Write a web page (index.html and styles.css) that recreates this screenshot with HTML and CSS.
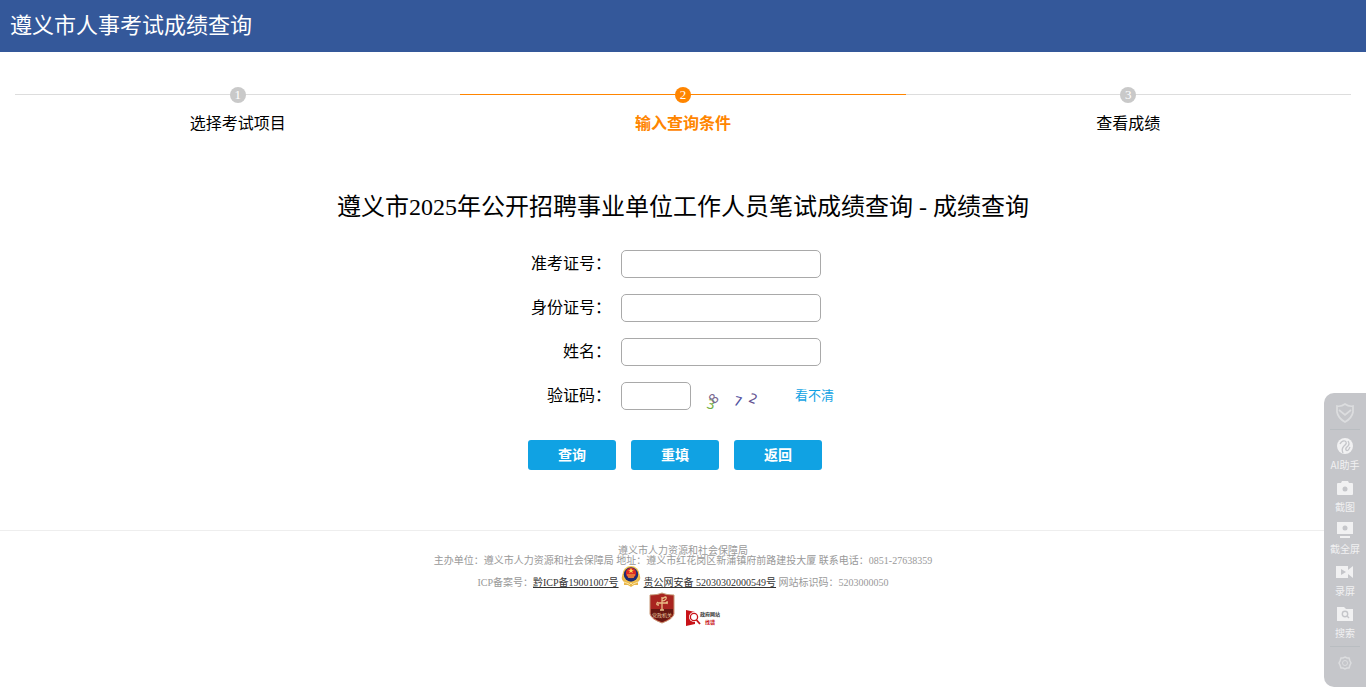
FILE: index.html
```
<!DOCTYPE html>
<html lang="zh-CN">
<head>
    <meta charset="UTF-8">
    <meta name="viewport" content="width=device-width, initial-scale=1.0">
    <title>遵义市人事考试成绩查询</title>
    <link rel="stylesheet" href="styles.css">
</head>
<body>
    <header class="header">遵义市人事考试成绩查询</header>

    <ol class="steps">
        <li class="step"><span class="step-num">1</span><span class="step-name">选择考试项目</span></li>
        <li class="step active"><span class="step-num">2</span><span class="step-name">输入查询条件</span></li>
        <li class="step"><span class="step-num">3</span><span class="step-name">查看成绩</span></li>
    </ol>

    <main>
        <h1 class="title">遵义市2025年公开招聘事业单位工作人员笔试成绩查询 - 成绩查询</h1>
        <form class="form">
            <div class="row">
                <label for="zkzh">准考证号：</label>
                <input type="text" id="zkzh">
            </div>
            <div class="row">
                <label for="sfzh">身份证号：</label>
                <input type="text" id="sfzh">
            </div>
            <div class="row">
                <label for="xm">姓名：</label>
                <input type="text" id="xm">
            </div>
            <div class="row">
                <label for="yzm">验证码：</label>
                <input type="text" id="yzm" class="short">
                <svg class="captcha" viewBox="0 0 84 28">
                    <text x="6" y="27" fill="#6fae3c" transform="rotate(15 10 22)">3</text>
                    <text x="9" y="21" fill="#7b6890" transform="rotate(-45 13 17)">8</text>
                    <text x="33" y="24" fill="#5050a0" transform="rotate(15 37 19)">7</text>
                    <text x="48" y="21" fill="#62508f" transform="rotate(20 52 17)">2</text>
                </svg>
                <a href="#" class="refresh">看不清</a>
            </div>
            <div class="buttons">
                <button type="submit">查询</button>
                <button type="reset">重填</button>
                <button type="button">返回</button>
            </div>
        </form>
    </main>

    <footer class="footer">
        <p>遵义市人力资源和社会保障局</p>
        <p>主办单位：遵义市人力资源和社会保障局 地址：遵义市红花岗区新蒲镇府前路建投大厦 联系电话：0851-27638359</p>
        <p class="record">ICP备案号：<a href="#">黔ICP备19001007号</a>
            <svg class="police" viewBox="0 0 20 22">
                <path d="M2 8 Q-1 13 3 16 L3 19 L7 19 L10 21 L13 19 L17 19 L17 16 Q21 13 18 8Z" fill="#e9b64c"/>
                <path d="M3 16 L8 18 M17 16 L12 18 M7 20 L10 17 L13 20" stroke="#fbe5a1" fill="none"/>
                <circle cx="10" cy="8.5" r="8.5" fill="#f2c24d"/>
                <circle cx="10" cy="8.5" r="7.2" fill="#1c2c73"/>
                <circle cx="10" cy="7" r="5.2" fill="#d92824"/>
                <path d="M10 2 L11 4 L13 4 L11 5 L12 7 L10 6 L8 7 L9 5 L7 4 L9 4Z" fill="#ffdc55"/>
                <path d="M6 9 H14 M7 11 H13" stroke="#f4c34d"/>
            </svg>
            <a href="#">贵公网安备 52030302000549号</a> 网站标识码：5203000050</p>
        <div class="badges">
            <svg class="shield" viewBox="0 0 26 32">
                <path d="M13 1 Q17 3 25 3 V22 Q24 27 13 31 Q2 27 1 22 V3 Q9 3 13 1Z" fill="#a92520" stroke="#c69876"/>
                <path d="M2 17 H24 V22 Q23 26 13 30 Q3 26 2 22Z" fill="#671812"/>
                <path d="M13 5 V18 M13 7 Q18 3 17 7 Q16 9 13 9 M9 11 H17 Q19 8 18 12 M9 10 Q6 13 10 13 M11 18 H15" fill="none" stroke="#e9bd86" stroke-width="1.3"/>
                <text x="13" y="25" text-anchor="middle">党政机关</text>
            </svg>
            <svg class="finder" viewBox="0 0 38 18">
                <path d="M1 1 L10 3 V15 L1 17Z" fill="#c81218"/>
                <circle cx="9" cy="8" r="5" fill="#fff"/>
                <circle cx="9" cy="8" r="3.6" fill="#fff" stroke="#c81218" stroke-width="1.3"/>
                <path d="M11.5 11 L15 15" stroke="#c81218" stroke-width="1.8"/>
                <text x="15" y="7" fill="#333">政府网站</text>
                <text x="20" y="15" fill="#c81218">找错</text>
            </svg>
        </div>
    </footer>

    <aside class="toolbar">
        <button type="button" class="tool faint" aria-label="盾牌">
            <svg viewBox="0 0 20 20"><path d="M10 1 Q14 4 18 3 V9 Q17 15 10 19 Q3 15 2 9 V3 Q6 4 10 1Z M4 7 L10 12 L16 7" fill="none" stroke="currentColor" stroke-width="1.7"/></svg>
        </button>
        <hr>
        <button type="button" class="tool">
            <svg viewBox="0 0 20 20"><circle cx="10" cy="10" r="8" fill="currentColor"/><path d="M5 8 Q7 4 10 5 Q13 7 9 10 Q6 13 8 17 M15 11 Q13 16 11 14 Q10 12 13 10 Q15 8 13 5" fill="none" stroke="#c5c6ca" stroke-width="1.3"/></svg>
            <span>AI助手</span>
        </button>
        <button type="button" class="tool">
            <svg viewBox="0 0 20 20"><path d="M3 5 H6 L7 3 H13 L14 5 H17 Q18 5 18 6 V16 Q18 17 17 17 H3 Q2 17 2 16 V6 Q2 5 3 5Z" fill="currentColor"/><circle cx="10" cy="11" r="2.5" fill="#c5c6ca"/></svg>
            <span>截图</span>
        </button>
        <button type="button" class="tool">
            <svg viewBox="0 0 20 20"><path d="M2 2 H18 V14 H2Z M5 16 H15 V18 H5Z" fill="currentColor"/><circle cx="10" cy="8" r="2.5" fill="#c5c6ca"/></svg>
            <span>截全屏</span>
        </button>
        <button type="button" class="tool">
            <svg viewBox="0 0 20 20"><path d="M1 4 H13 V8 L18 4 V16 L13 12 V16 H1Z" fill="currentColor"/><path d="M6 7 L11 10 L6 13Z" fill="#c5c6ca"/></svg>
            <span>录屏</span>
        </button>
        <button type="button" class="tool">
            <svg viewBox="0 0 20 20"><path d="M2 3 H9 L11 5 H18 V17 H2Z" fill="currentColor"/><circle cx="10" cy="10" r="2.7" fill="none" stroke="#c5c6ca" stroke-width="1.4"/><path d="M12 12 L14 14" stroke="#c5c6ca" stroke-width="1.5"/></svg>
            <span>搜索</span>
        </button>
        <hr class="last">
        <button type="button" class="tool faint" aria-label="设置">
            <svg viewBox="0 0 20 20"><path d="M10 4 L12 5 L14 5 L15 8 L16 10 L15 12 L14 15 L12 15 L10 16 L8 15 L6 15 L5 12 L4 10 L5 8 L6 5 L8 5Z" fill="none" stroke="currentColor" stroke-width="1.5"/><circle cx="10" cy="10" r="2.5" fill="none" stroke="currentColor"/></svg>
        </button>
    </aside>
</body>
</html>
```
FILE: styles.css
```
* {
    box-sizing: border-box;
}
body {
    margin: 0;
    background: #fff;
    color: #000;
    font-family: "Liberation Serif", "Noto Sans CJK SC", serif;
    font-size: 16px;
    line-height: 24px;
}
.header {
    height: 52px;
    padding: 0 10px;
    background: #34589a;
    color: #fff;
    font-size: 22px;
    line-height: 52px;
}
.steps {
    display: flex;
    margin: 35px 0 0;
    padding: 0 15px;
    list-style: none;
}
.step {
    flex: 1;
    display: flex;
    flex-direction: column;
    align-items: center;
    gap: 9px;
    background: linear-gradient(#ddd, #ddd) 0 7px / 100% 1px no-repeat;
}
.step-num {
    width: 16px;
    height: 16px;
    border-radius: 50%;
    background: #c9c9c9;
    color: #fff;
    font-size: 13px;
    line-height: 16px;
    text-align: center;
}
.step.active {
    background-image: linear-gradient(#ff8500, #ff8500);
    color: #ff8500;
    font-weight: bold;
}
.step.active .step-num {
    background: #ff8500;
    font-weight: normal;
}
.title {
    margin: 54px 0 25px;
    font-size: 24px;
    font-weight: normal;
    line-height: 35px;
    text-align: center;
}
.form {
    width: 310px;
    margin: 0 auto;
}
.row {
    display: flex;
    align-items: center;
    gap: 10px;
    height: 28px;
    margin-bottom: 16px;
}
.row label {
    width: 83px;
    text-align: right;
    white-space: nowrap;
}
.row input {
    width: 200px;
    height: 28px;
    padding: 0 5px;
    border: 1px solid #a9a9a9;
    border-radius: 5px;
}
.row .short {
    width: 70px;
}
.captcha {
    width: 84px;
    height: 28px;
    overflow: visible;
    font-family: "DejaVu Sans", sans-serif;
    font-size: 13px;
}
.refresh {
    color: #10a2e3;
    font-size: 13px;
    text-decoration: none;
    white-space: nowrap;
}
.buttons {
    display: flex;
    gap: 15px;
    padding-top: 14px;
}
.buttons button {
    width: 88px;
    height: 30px;
    padding: 0 0 2px;
    border: none;
    border-radius: 3px;
    background: #10a2e3;
    color: #fff;
    font-family: inherit;
    font-size: 14px;
    font-weight: bold;
    cursor: pointer;
}
.footer {
    margin-top: 60px;
    padding-top: 15px;
    border-top: 1px solid #eee;
    color: #999;
    font-size: 10px;
    line-height: 10px;
    text-align: center;
}
.footer p {
    margin: 0;
}
.footer a {
    color: #333;
}
.footer .record {
    height: 26px;
    line-height: 22px;
}
.police {
    width: 20px;
    height: 22px;
    vertical-align: -2px;
}
.badges {
    display: flex;
    justify-content: center;
    align-items: flex-start;
    gap: 10px;
    padding-left: 6px;
}
.shield {
    width: 26px;
    height: 32px;
    font-size: 5px;
    fill: #efc9a0;
}
.finder {
    width: 38px;
    height: 18px;
    margin-top: 17px;
    overflow: visible;
    font-size: 5px;
    font-weight: bold;
}
.toolbar {
    position: fixed;
    right: 0;
    bottom: 0;
    width: 42px;
    padding: 10px 6px 14px;
    border-radius: 10px 0 0 10px;
    background: #c5c6ca;
}
.toolbar hr {
    margin: 6px 0;
    border: none;
    border-top: 1px solid #b9bdc1;
}
.toolbar .last {
    margin-top: 0;
}
.tool {
    display: flex;
    flex-direction: column;
    align-items: center;
    width: 30px;
    height: 42px;
    padding: 0;
    border: none;
    background: none;
    color: #f1f1f2;
    font-family: "Noto Sans CJK SC", sans-serif;
    font-size: 10px;
    line-height: 18px;
    white-space: nowrap;
}
.tool svg {
    flex: none;
    width: 20px;
    height: 20px;
}
.tool.faint {
    height: 20px;
    color: #dcdddf;
}
```
